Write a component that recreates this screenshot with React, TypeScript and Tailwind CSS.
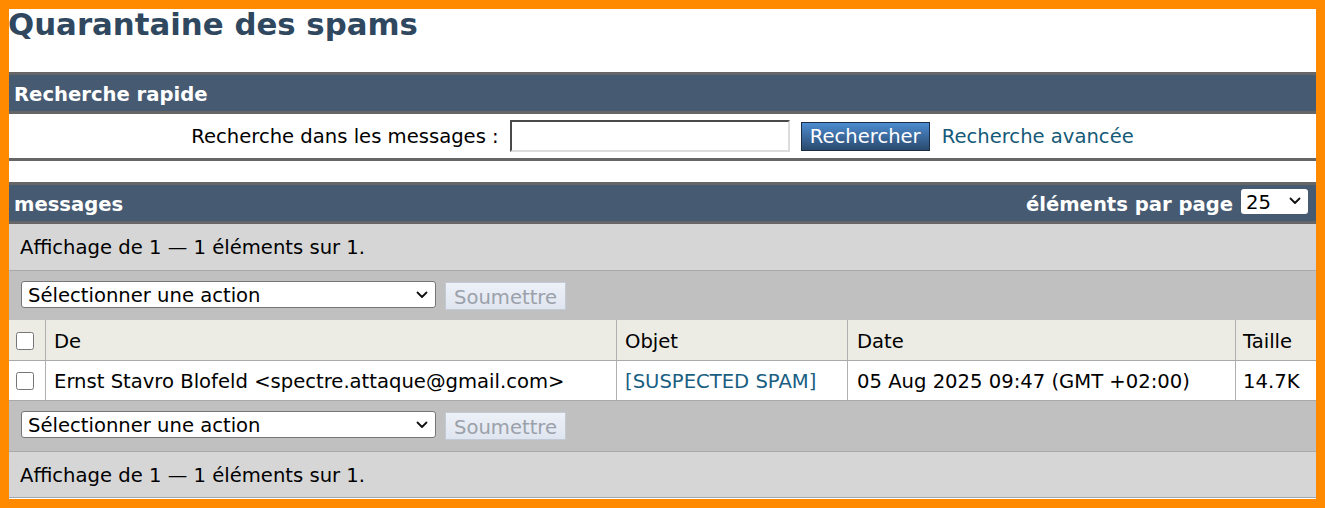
import React from 'react';

function Chevron({ className }: { className?: string }) {
  return (
    <svg className={className} width="12" height="8" viewBox="0 0 12 8" fill="none">
      <path d="M1.5 1.5 L6 6 L10.5 1.5" stroke="#111" strokeWidth="1.8" strokeLinecap="round" strokeLinejoin="round" />
    </svg>
  );
}

function ActionSelect() {
  return (
    <>
      <div className="relative">
        <select className="appearance-none w-[415px] h-[27px] bg-white border border-[#767676] rounded-[3px] pl-[6px] pt-[2px] text-[19.6px] leading-[23px] text-black">
          <option>Sélectionner une action</option>
        </select>
        <Chevron className="absolute right-[8px] top-[10px] pointer-events-none" />
      </div>
      <button
        disabled
        className="h-[28px] w-[121px] bg-gradient-to-b from-[#edf1f8] to-[#dfe5ef] border border-[#c3cad6] text-[#9ba1aa] text-[19.6px] leading-[26px] pt-[2px]"
      >
        Soumettre
      </button>
    </>
  );
}

function Checkbox() {
  return <input type="checkbox" className="w-[18px] h-[18px] m-0 align-middle" />;
}

export default function App() {
  const cell = 'flex items-center border-r border-[#b0b0b0] px-2 pt-[3px] whitespace-nowrap';
  return (
    <div
      className="w-[1325px] h-[508px] border-[9px] border-[#ff8a00] bg-white flex flex-col text-black text-[19.6px]"
      style={{ fontFamily: '"DejaVu Sans", Verdana, sans-serif' }}
    >
      <div className="h-[63px]">
        <h1 className="text-[30.8px] leading-[32px] font-bold text-[#2f4860] -ml-[1px] -mt-[1px]">
          Quarantaine des spams
        </h1>
      </div>

      {/* Recherche rapide */}
      <div className="border-y-[3px] border-[#666666]">
        <div className="h-[39px] bg-[#465a72] border-b-[3px] border-[#666666] flex items-center pl-[5px] pt-[3px] text-white font-bold">
          Recherche rapide
        </div>
        <div className="h-[44px] flex items-center justify-center">
          <span className="pt-[2px]">Recherche dans les messages :</span>
          <input
            type="text"
            className="ml-[11px] w-[280px] h-[32px] bg-white border-2 border-t-[#4a4a4a] border-l-[#4a4a4a] border-b-[#dcdcdc] border-r-[#dcdcdc]"
          />
          <button className="ml-[11px] w-[129px] h-[29px] bg-gradient-to-b from-[#4d8dd2] to-[#2a4a6e] border border-[#1a2d45] text-white leading-[26px] pt-[1px]">
            Rechercher
          </button>
          <a href="#" className="ml-[12px] pt-[2px] text-[#155a78]">
            Recherche avancée
          </a>
        </div>
      </div>

      <div className="h-[21px]" />

      {/* messages */}
      <div className="border-t-[3px] border-[#666666] flex flex-col">
        <div className="h-[39px] bg-[#465a72] border-b-[3px] border-[#666666] flex items-center justify-between pl-[5px] pr-[8px] text-white font-bold">
          <span className="pt-[3px]">messages</span>
          <div className="flex items-center gap-[8px]">
            <span className="pt-[3px]">éléments par page</span>
            <div className="relative">
              <select className="appearance-none w-[67px] h-[25px] bg-white rounded-[3px] pl-[5px] pt-[2px] text-black font-normal text-[19.6px] leading-[21px]">
                <option>25</option>
              </select>
              <Chevron className="absolute right-[7px] top-[9px] pointer-events-none" />
            </div>
          </div>
        </div>

        <div className="h-[47px] bg-[#d6d6d6] border-b border-[#a9a9a9] flex items-center pl-[11px] pt-[2px]">
          Affichage de 1 — 1 éléments sur 1.
        </div>

        <div className="h-[49px] bg-[#c0c0c0] flex items-center pl-[12px] gap-[9px]">
          <ActionSelect />
        </div>

        <div className="grid grid-cols-[37px_571px_231px_388px_80px] h-[41px] bg-[#ecece4] border-b border-[#a9a9a9]">
          <div className="flex items-center border-r border-[#b0b0b0] pl-[7px] pt-[2px]">
            <Checkbox />
          </div>
          <div className={cell}>De</div>
          <div className={cell}>Objet</div>
          <div className={cell + ' pl-[9px]'}>Date</div>
          <div className="flex items-center pl-[7px] pt-[3px]">Taille</div>
        </div>

        <div className="grid grid-cols-[37px_571px_231px_388px_80px] h-[40px] bg-white border-b border-[#a9a9a9]">
          <div className="flex items-center border-r border-[#b0b0b0] pl-[7px]">
            <Checkbox />
          </div>
          <div className={cell}>Ernst Stavro Blofeld &lt;spectre.attaque@gmail.com&gt;</div>
          <div className={cell}>
            <a href="#" className="text-[#1a5f82]">
              [SUSPECTED SPAM]
            </a>
          </div>
          <div className={cell + ' pl-[9px]'}>05 Aug 2025 09:47 (GMT +02:00)</div>
          <div className="flex items-center pl-[7px] pt-[3px]">14.7K</div>
        </div>

        <div className="h-[51px] bg-[#c0c0c0] border-b border-[#a9a9a9] flex items-center pl-[12px] gap-[9px]">
          <ActionSelect />
        </div>

        <div className="h-[46px] bg-[#d6d6d6] border-b border-[#9fa8b5] flex items-center pl-[11px] pt-[2px]">
          Affichage de 1 — 1 éléments sur 1.
        </div>
      </div>
    </div>
  );
}
